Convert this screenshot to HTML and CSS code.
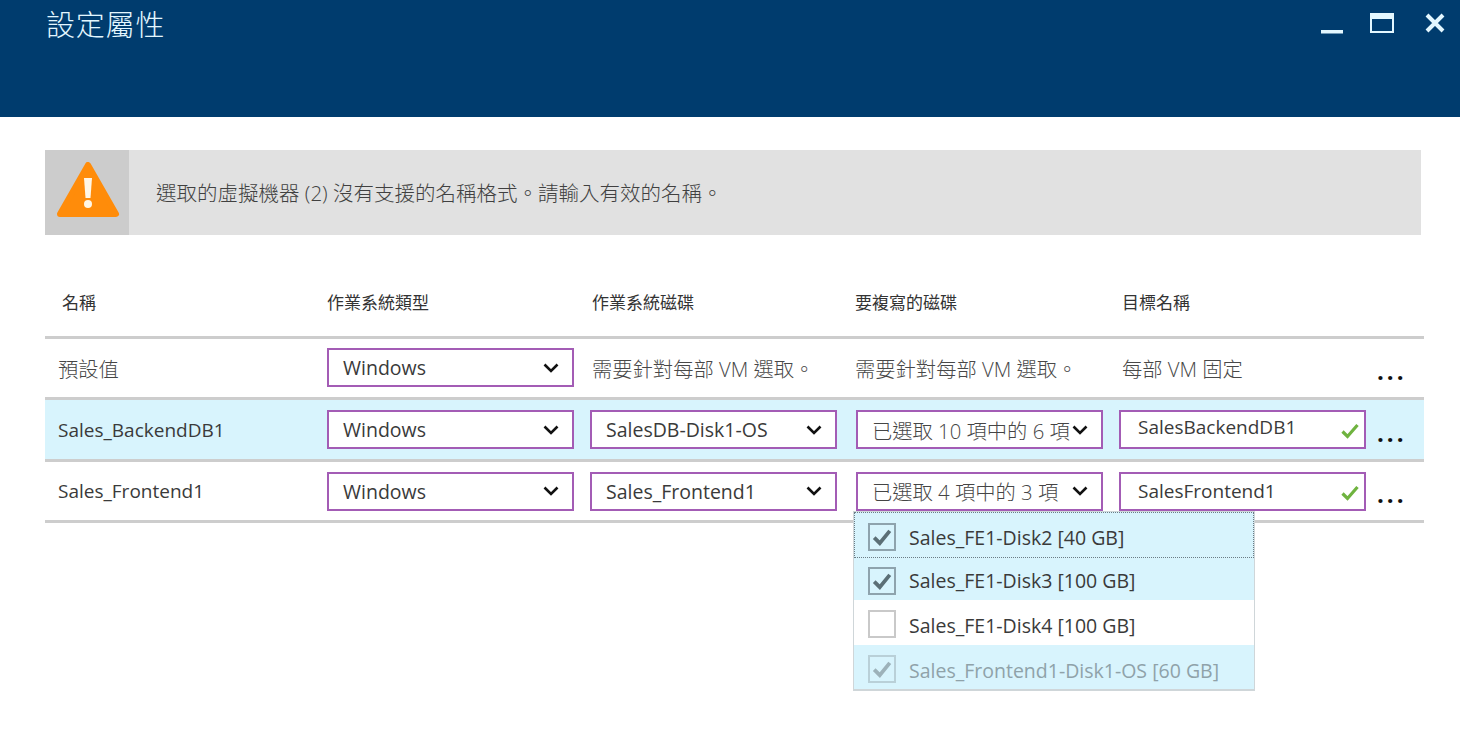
FILE: index.html
```html
<!DOCTYPE html>
<html lang="zh-Hant">
<head>
  <meta charset="UTF-8">
  <title>設定屬性</title>
  <link rel="stylesheet" href="styles.css">
</head>
<body>
  <div class="header">
    <h1>設定屬性</h1>
    <div class="window-btns">
      <svg width="22" height="22" viewBox="0 0 22 22"><rect x="0" y="17" width="22" height="3.5" fill="#e3f7ff"/></svg>
      <svg width="24" height="20" viewBox="0 0 24 20"><rect x="1" y="1" width="22" height="18" fill="none" stroke="#e3f7ff" stroke-width="2"/><rect x="1" y="1" width="22" height="5" fill="#e3f7ff"/></svg>
      <svg class="btn-close" width="20" height="20" viewBox="0 0 20 20"><path d="M2 2L18 18M18 2L2 18" stroke="#e3f7ff" stroke-width="4" fill="none"/></svg>
    </div>
  </div>

  <div class="content">
    <div class="warning">
      <div class="warning-icon">
        <svg width="64" height="56" viewBox="0 0 64 56">
          <path d="M32 3L60 52H4Z" fill="#ff8c0a" stroke="#ff8c0a" stroke-width="6" stroke-linejoin="round"/>
          <path d="M28 16H36L34.5 36H29.5Z" fill="#fff6e6"/>
          <circle cx="32" cy="42" r="4" fill="#fff6e6"/>
        </svg>
      </div>
      <div class="warning-text">選取的虛擬機器 (2) 沒有支援的名稱格式。請輸入有效的名稱。</div>
    </div>

    <div class="table">
      <div class="row head">
        <div class="name">名稱</div>
        <div>作業系統類型</div>
        <div class="h-os">作業系統磁碟</div>
        <div class="h-disks">要複寫的磁碟</div>
        <div class="h-target">目標名稱</div>
      </div>

      <div class="row first">
        <div class="cell-name cjk">預設值</div>
        <div class="select"><span>Windows</span><svg class="chev" viewBox="0 0 16 10"><path d="M1.5 1.5L8 8L14.5 1.5" /></svg></div>
        <div class="note">需要針對每部 VM 選取。</div>
        <div class="note note-disks">需要針對每部 VM 選取。</div>
        <div class="note target-note">每部 VM 固定</div>
        <div class="dots">...</div>
      </div>

      <div class="row selected">
        <div class="cell-name">Sales_BackendDB1</div>
        <div class="select"><span>Windows</span><svg class="chev" viewBox="0 0 16 10"><path d="M1.5 1.5L8 8L14.5 1.5" /></svg></div>
        <div class="select"><span>SalesDB-Disk1-OS</span><svg class="chev" viewBox="0 0 16 10"><path d="M1.5 1.5L8 8L14.5 1.5" /></svg></div>
        <div class="select"><span class="cjk">已選取 10 項中的 6 項</span><svg class="chev" viewBox="0 0 16 10"><path d="M1.5 1.5L8 8L14.5 1.5" /></svg></div>
        <div class="select input raised"><span>SalesBackendDB1</span><svg class="ok" viewBox="0 0 18 16"><path d="M1.5 8.5L6.5 13.5L16.5 2" /></svg></div>
        <div class="dots">...</div>
      </div>

      <div class="row">
        <div class="cell-name">Sales_Frontend1</div>
        <div class="select"><span>Windows</span><svg class="chev" viewBox="0 0 16 10"><path d="M1.5 1.5L8 8L14.5 1.5" /></svg></div>
        <div class="select"><span>Sales_Frontend1</span><svg class="chev" viewBox="0 0 16 10"><path d="M1.5 1.5L8 8L14.5 1.5" /></svg></div>
        <div class="select-wrap">
          <div class="select"><span class="cjk">已選取 4 項中的 3 項</span><svg class="chev" viewBox="0 0 16 10"><path d="M1.5 1.5L8 8L14.5 1.5" /></svg></div>
          <div class="dropdown">
            <div class="opt on focus"><span class="box"><svg viewBox="0 0 18 16"><path d="M2 8.5L7 13.5L16 2.5" /></svg></span><span class="label">Sales_FE1-Disk2 [40 GB]</span></div>
            <div class="opt on short"><span class="box"><svg viewBox="0 0 18 16"><path d="M2 8.5L7 13.5L16 2.5" /></svg></span><span class="label">Sales_FE1-Disk3 [100 GB]</span></div>
            <div class="opt plain"><span class="box"></span><span class="label">Sales_FE1-Disk4 [100 GB]</span></div>
            <div class="opt on disabled"><span class="box"><svg viewBox="0 0 18 16"><path d="M2 8.5L7 13.5L16 2.5" /></svg></span><span class="label">Sales_Frontend1-Disk1-OS [60 GB]</span></div>
          </div>
        </div>
        <div class="select input"><span>SalesFrontend1</span><svg class="ok" viewBox="0 0 18 16"><path d="M1.5 8.5L6.5 13.5L16.5 2" /></svg></div>
        <div class="dots">...</div>
      </div>
    </div>
  </div>
</body>
</html>
```

FILE: styles.css
```css
* {
  box-sizing: border-box;
}
body {
  margin: 0;
  background: #fff;
  color: #3a3a3a;
  font-family: "Open Sans", "Noto Sans CJK TC", sans-serif;
  font-size: 19px;
  height: 745px;
  overflow: hidden;
}
.header {
  height: 117px;
  background: #003c6e;
  display: flex;
  justify-content: space-between;
  align-items: flex-start;
  padding: 0 15px 0 46px;
}
.header h1 {
  margin: 3px 0 0;
  color: #e3f7ff;
  font-size: 29px;
  font-weight: 300;
  line-height: 40px;
  letter-spacing: 0.8px;
  font-family: "Noto Sans CJK TC", sans-serif;
}
.window-btns {
  display: flex;
  align-items: flex-start;
  gap: 27px;
  padding-top: 13px;
}
.btn-close {
  margin-left: 4px;
}
.content {
  padding: 33px 36px 0 45px;
}
.warning {
  display: flex;
  align-items: center;
  width: 1376px;
  height: 85px;
  background: #e1e1e1;
}
.warning-icon {
  width: 84px;
  height: 85px;
  background: #cccccc;
  display: flex;
  align-items: center;
  justify-content: center;
  padding: 0 0 5px 2px;
}
.warning-text {
  padding: 0 0 1px 27px;
  font-size: 20.5px;
  font-weight: 300;
  color: #404040;
}
.table {
  margin-top: 44px;
  width: 1379px;
}
.row {
  display: grid;
  grid-template-columns: 282px 263px 266px 263px 258px 47px;
  align-items: center;
  height: 61px;
  border-bottom: 3px solid #cdcdcd;
}
.row.head {
  height: 60px;
  font-size: 17px;
  font-weight: 400;
  padding-bottom: 12px;
  color: #333;
}
.row.first {
  padding-bottom: 1px;
}
.row.selected {
  height: 62px;
  background: #d8f4fd;
}
.name {
  padding-left: 17px;
}
.h-os {
  padding-left: 2px;
}
.h-disks {
  margin-left: -1px;
}
.h-target {
  padding-left: 3px;
}
.cell-name {
  padding-left: 13px;
}
.cjk {
  font-size: 20.3px;
  font-weight: 300;
  color: #454545;
}
.note {
  padding-left: 2px;
  color: #484848;
  font-size: 20.3px;
  font-weight: 300;
}
.note-disks {
  padding-left: 0;
  margin-left: -1px;
}
.target-note {
  padding-left: 3px;
}
.select {
  width: 247px;
  height: 39px;
  background: #fff;
  border: 2px solid #a35cb5;
  display: flex;
  align-items: center;
  justify-content: space-between;
  padding: 0 13px 0 14px;
  font-size: 19.5px;
  white-space: nowrap;
}
.select.input {
  padding-left: 17px;
  padding-right: 5px;
  font-size: 19px;
}
.select.raised span {
  margin-bottom: 5px;
}
.chev {
  width: 16px;
  height: 10px;
  flex: none;
}
.chev path {
  fill: none;
  stroke: #111;
  stroke-width: 2.6;
}
.ok {
  width: 18px;
  height: 16px;
  flex: none;
  margin-top: 3px;
}
.ok path {
  fill: none;
  stroke: #6fb33f;
  stroke-width: 3.2;
}
.dots {
  font-size: 24px;
  font-weight: 700;
  color: #111;
  letter-spacing: 3px;
  line-height: 20px;
  padding-top: 6px;
}
.select-wrap {
  position: relative;
}
.dropdown {
  position: absolute;
  left: -3px;
  top: 39px;
  width: 402px;
  background: #fff;
  border: 1px solid #cfd6d9;
  border-bottom-width: 2px;
  z-index: 2;
}
.opt {
  height: 44px;
  display: flex;
  align-items: center;
  padding: 4px 0 0 14px;
  font-size: 19.5px;
  white-space: nowrap;
}
.opt.on {
  background: #d8f4fd;
}
.opt.focus {
  height: 46px;
  outline: 1px dotted #6b7c85;
  outline-offset: -1px;
}
.opt.short {
  height: 42px;
}
.opt.plain {
  height: 45px;
}
.label {
  padding-top: 3px;
}
.focus .label {
  padding-top: 1px;
}
.short .label {
  padding-top: 0;
}
.box {
  width: 28px;
  height: 28px;
  border: 2px solid #c9c9c9;
  background: transparent;
  margin-right: 13px;
  display: flex;
  align-items: center;
  justify-content: center;
}
.on .box {
  border-color: #8ea3ad;
}
.box svg {
  width: 20px;
  height: 18px;
}
.box path {
  fill: none;
  stroke: #5b6f76;
  stroke-width: 3.4;
}
.disabled {
  color: #8fa2a9;
}
.disabled .box {
  border-color: #b9d0d8;
}
.disabled .box path {
  stroke: #9db2ba;
}
```
